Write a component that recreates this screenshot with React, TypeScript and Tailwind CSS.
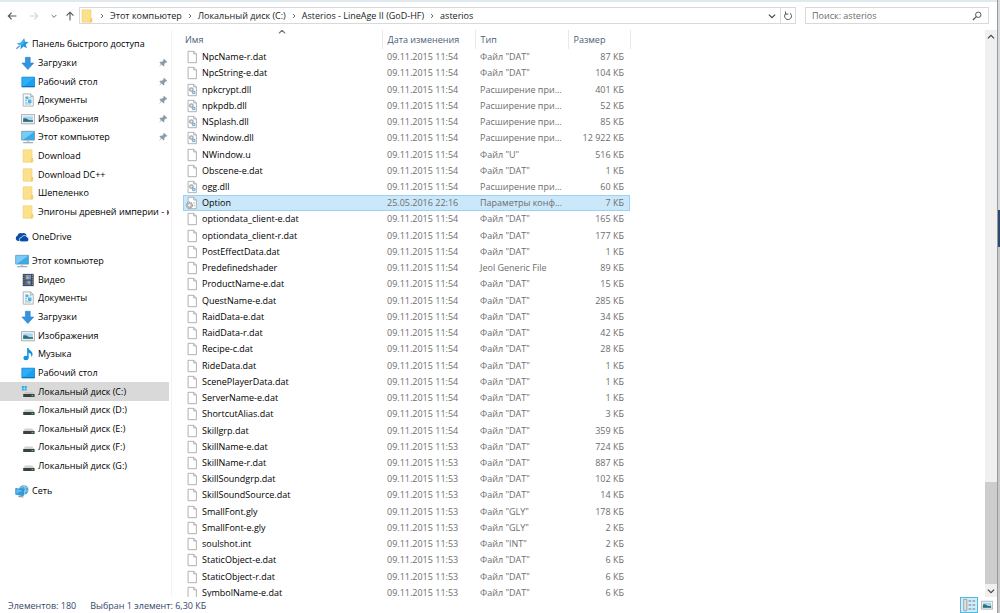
import type { ReactNode } from "react";

type IconName =
  | "star" | "download" | "desktop" | "document" | "picture" | "computer"
  | "folder" | "cloud" | "video" | "music" | "system" | "drive" | "network";

function Svg({ children, size = "size-[14px]", box = "0 0 16 16" }: { children: ReactNode; size?: string; box?: string }) {
  return (
    <svg aria-hidden="true" viewBox={box} className={`${size} shrink-0`} fill="none">
      {children}
    </svg>
  );
}

const drawings: Record<IconName, ReactNode> = {
  star: (
    <>
      <path d="M10.500 1.500l.9 3.900 4.300.4-3.400 2.700 1.200 4.300-3.800-1.900-3.500 3.300.5-4.700-4.500-1.800 4.700-1.500z" fill="#1c98e4" />
      <path d="M1.500 13.500l4-3.500" stroke="#5b9bc9" strokeWidth="1.600" />
      <path d="M10.500 1.500L7 6.200 2.200 7.700l4.500 1.800L10 8z" fill="#45aeee" />
    </>
  ),
  download: <path d="M5 1.500h5.500v6.500H14.500L7.800 15.500 1 8h4z" fill="#3393df" stroke="#2a82cc" strokeWidth=".7" />,
  desktop: (
    <>
      <path d="M1 2.500h14.500v11H1z" fill="#18a0f2" stroke="#0b7fd0" strokeWidth=".9" />
      <path d="M1.500 3h13.500L3 13H1.500z" fill="#2fadf5" />
      <path d="M1 13.300h14.500" stroke="#0a66a8" />
    </>
  ),
  document: (
    <>
      <path d="M2.500 1h8.500l3 3v11H2.500z" fill="#f7f9fa" stroke="#a3abb1" strokeWidth="1" />
      <path d="M11 1v3h3" stroke="#a3abb1" />
      <path d="M5 4h3.500v3H5zM8 7.500h4v4H8z" fill="#55b1de" />
      <path d="M4.500 8.500H7M4.500 10.500H7M4.500 12.500h7M9.500 5.500h2.500" stroke="#7fb4cf" />
    </>
  ),
  picture: (
    <>
      <path d="M.6 3h15v10.500H.6z" fill="#f3f5f6" stroke="#9aa3a9" strokeWidth="1" />
      <path d="M2.500 5h11v6.500h-11z" fill="#a5d6ef" />
      <path d="M2.500 7.500q3-1 5 .8t6 .7v2.500h-11z" fill="#2f6a88" />
      <path d="M2.500 10.500h11v1h-11z" fill="#4d8f66" />
    </>
  ),
  computer: (
    <>
      <path d="M.8 1.500h14.700v10H.8z" fill="#36aced" stroke="#6f93a8" strokeWidth=".9" />
      <path d="M1.300 2h13.700L2.500 11H1.300z" fill="#7ccbf5" />
      <path d="M6.500 11.500h3v2h-3z" fill="#b9c7cf" />
      <path d="M2.500 14.500h11.500" stroke="#93a7b3" strokeWidth="1.300" />
    </>
  ),
  folder: (
    <>
      <path d="M2.500 1h10v14H2.500z" fill="#fbdf86" stroke="#e7c25c" strokeWidth=".7" />
      <path d="M3 1.500h9v13H3z" fill="#fde08c" />
      <path d="M12 10.500h2v4.500H11z" fill="#f4cd5b" />
    </>
  ),
  cloud: (
    <>
      <path d="M3.500 12.500a3 3 0 0 1-.7-5.800 3.500 3.500 0 0 1 5-3 4 4 0 0 1 5.500 2.300L7 12.500z" fill="#0b4ea2" />
      <path d="M7.500 13.500a2.500 2.500 0 0 1 0-5 3.400 3.400 0 0 1 6-.7 3 3 0 0 1 .3 5.700z" fill="#094ab2" stroke="#fff" strokeWidth=".8" />
    </>
  ),
  video: (
    <>
      <path d="M2 1h12.500v14H2z" fill="#3d4348" />
      <path d="M5 2h6.500v5.500H5z" fill="#6d91d6" />
      <path d="M5 8.500h6.500V14H5z" fill="#4d76b5" />
      <path d="M6.500 3.500l3 2-3 2zM7 10l3-1v4z" fill="#e9b44e" />
      <path d="M3.500 2v12.500M13 2v12.500" stroke="#b5babd" strokeWidth="1" strokeDasharray="1.200 1.400" />
    </>
  ),
  music: (
    <>
      <path d="M7 1h1.500c.2 2.500 5 3.500 4.700 7.500-.1 1.200-.8 2.200-1.700 2.700.8-2.700-.6-4.200-2.800-4.700V12.500H7z" fill="#1292e4" />
      <ellipse cx="5.700" cy="12.500" rx="3" ry="2.500" fill="#1292e4" />
    </>
  ),
  system: (
    <>
      <path d="M1 1h2.300v2.300H1zM4 1h2.500v2.300H4zM1 4h2.300v2.300H1zM4 4h2.500v2.300H4z" fill="#21aee9" />
      <path d="M4.500 8h8.500l2.200 2.500H2.500z" fill="#c4c6c7" />
      <path d="M2.500 10.300h13v3.400h-13z" fill="#3b4043" />
      <path d="M12 12h2" stroke="#3ddc5a" strokeWidth="1.400" />
    </>
  ),
  drive: (
    <>
      <path d="M4.500 7.500h8.500l2.200 3H2.500z" fill="#d0d2d3" />
      <path d="M2.500 10.300h13v3.400h-13z" fill="#3b4043" />
      <path d="M12 12h2" stroke="#3ddc5a" strokeWidth="1.400" />
    </>
  ),
  network: (
    <>
      <circle cx="10" cy="6.800" r="5.400" fill="#4ba3d3" />
      <path d="M6.500 4q4-3 7.500.5M9 9q4-1.500 6-1.500M10.500 1.500q3 5 0 10" stroke="#a6dcf2" strokeWidth=".9" />
      <path d="M.8 5l8.700 1.500v7L.8 11.800z" fill="#2d9fe3" stroke="#2b86c2" strokeWidth=".8" />
      <path d="M1.500 6l7 1.200-7 3.800z" fill="#62bdf0" />
      <path d="M4 14.300l5.500.5" stroke="#6f8c9c" strokeWidth="1.200" />
    </>
  ),
};

function Pin() {
  return (
    <Svg size="size-[10px]">
      <path d="M9.500 1l5.500 5.500-1.500.8-1-.2-2.500 2.500.2 2.900-1.200 1.200L5.700 10.400 1.500 14.500l3.200-5L2.300 7l1.200-1.200 2.900.2 2.500-2.500-.2-1z" fill="#8f9ba4" />
    </Svg>
  );
}

type Place = { icon: IconName; name: string; pinned?: boolean; selected?: boolean; root?: boolean };

const places: Place[][] = [
  [
    { icon: "star", name: "Панель быстрого доступа", root: true },
    { icon: "download", name: "Загрузки", pinned: true },
    { icon: "desktop", name: "Рабочий стол", pinned: true },
    { icon: "document", name: "Документы", pinned: true },
    { icon: "picture", name: "Изображения", pinned: true },
    { icon: "computer", name: "Этот компьютер", pinned: true },
    { icon: "folder", name: "Download" },
    { icon: "folder", name: "Download DC++" },
    { icon: "folder", name: "Шепеленко" },
    { icon: "folder", name: "Эпигоны древней империи - кн" },
  ],
  [{ icon: "cloud", name: "OneDrive", root: true }],
  [
    { icon: "computer", name: "Этот компьютер", root: true },
    { icon: "video", name: "Видео" },
    { icon: "document", name: "Документы" },
    { icon: "download", name: "Загрузки" },
    { icon: "picture", name: "Изображения" },
    { icon: "music", name: "Музыка" },
    { icon: "desktop", name: "Рабочий стол" },
    { icon: "system", name: "Локальный диск (C:)", selected: true },
    { icon: "drive", name: "Локальный диск (D:)" },
    { icon: "drive", name: "Локальный диск (E:)" },
    { icon: "drive", name: "Локальный диск (F:)" },
    { icon: "drive", name: "Локальный диск (G:)" },
  ],
  [{ icon: "network", name: "Сеть", root: true }],
];

const DAT = 'Файл "DAT"';
const DLL = "Расширение при...";
const GLY = 'Файл "GLY"';
const D54 = "09.11.2015 11:54";
const D53 = "09.11.2015 11:53";

const files: [string, string, string, string][] = [
  ["NpcName-r.dat", D54, DAT, "87"],
  ["NpcString-e.dat", D54, DAT, "104"],
  ["npkcrypt.dll", D54, DLL, "401"],
  ["npkpdb.dll", D54, DLL, "52"],
  ["NSplash.dll", D54, DLL, "85"],
  ["Nwindow.dll", D54, DLL, "12 922"],
  ["NWindow.u", D54, 'Файл "U"', "516"],
  ["Obscene-e.dat", D54, DAT, "1"],
  ["ogg.dll", D54, DLL, "60"],
  ["Option", "25.05.2016 22:16", "Параметры конф...", "7"],
  ["optiondata_client-e.dat", D54, DAT, "165"],
  ["optiondata_client-r.dat", D54, DAT, "177"],
  ["PostEffectData.dat", D54, DAT, "1"],
  ["Predefinedshader", D54, "Jeol Generic File", "89"],
  ["ProductName-e.dat", D54, DAT, "15"],
  ["QuestName-e.dat", D54, DAT, "285"],
  ["RaidData-e.dat", D54, DAT, "34"],
  ["RaidData-r.dat", D54, DAT, "42"],
  ["Recipe-c.dat", D54, DAT, "28"],
  ["RideData.dat", D54, DAT, "1"],
  ["ScenePlayerData.dat", D54, DAT, "1"],
  ["ServerName-e.dat", D54, DAT, "1"],
  ["ShortcutAlias.dat", D54, DAT, "3"],
  ["Skillgrp.dat", D54, DAT, "359"],
  ["SkillName-e.dat", D53, DAT, "724"],
  ["SkillName-r.dat", D53, DAT, "887"],
  ["SkillSoundgrp.dat", D53, DAT, "102"],
  ["SkillSoundSource.dat", D53, DAT, "14"],
  ["SmallFont.gly", D53, GLY, "178"],
  ["SmallFont-e.gly", D53, GLY, "2"],
  ["soulshot.int", D53, 'Файл "INT"', "2"],
  ["StaticObject-e.dat", D53, DAT, "6"],
  ["StaticObject-r.dat", D53, DAT, "6"],
  ["SymbolName-e.dat", D53, DAT, "6"],
];

function FileIcon({ kind }: { kind: "plain" | "library" | "settings" }) {
  return (
    <Svg>
      <path d="M3.500 1.500h6.500l3 3v10h-9.500z" fill="#fff" stroke="#a6a6a6" />
      <path d="M10 1.500v3h3" stroke="#a6a6a6" />
      {kind === "library" && (
        <>
          <circle cx="7.300" cy="7.500" r="2" stroke="#9badb9" strokeWidth="1.500" fill="#dfe8ee" />
          <circle cx="10" cy="10.800" r="1.500" stroke="#7faecb" strokeWidth="1.300" fill="#dfe8ee" />
        </>
      )}
      {kind === "settings" && (
        <>
          <circle cx="5" cy="10.500" r="3.300" stroke="#9aa0a5" strokeWidth="1.800" strokeDasharray="1.600 .8" fill="#e6e9eb" />
          <circle cx="5" cy="10.500" r="2.200" stroke="#9aa0a5" fill="#eef0f1" />
          <path d="M9.500 8h2M10 11h1.500" stroke="#a3abb0" />
        </>
      )}
    </Svg>
  );
}

function Chevron({ dir, className }: { dir: "right" | "down" | "up"; className: string }) {
  const d = dir === "right" ? "M3 1.500L6 4.500 3 7.500" : dir === "down" ? "M1 3l3.500 3.500L8 3" : "M1 6l3.500-3.500L8 6";
  return (
    <svg aria-hidden="true" viewBox="0 0 9 9" className={`shrink-0 ${className}`} fill="none">
      <path d={d} stroke="currentColor" strokeWidth="1.300" />
    </svg>
  );
}

const crumbs = ["Этот компьютер", "Локальный диск (C:)", "Asterios - LineAge II (GoD-HF)", "asterios"];

function Toolbar() {
  return (
    <header className="flex h-[30px] shrink-0 items-center border-t-2 border-[#dfe9ee] pb-px pl-[7px] pr-2 text-[#555]">
      <button type="button" aria-label="Назад">
        <Svg size="size-[10px]"><path d="M15 8H2M7.500 2.500L2 8l5.500 5.500" stroke="#555" strokeWidth="1.700" /></Svg>
      </button>
      <button type="button" aria-label="Вперёд" className="ml-3">
        <Svg size="size-[10px]"><path d="M1 8h13M8.500 2.500L14 8l-5.500 5.500" stroke="#d4d4d4" strokeWidth="1.700" /></Svg>
      </button>
      <button type="button" aria-label="Последние расположения" className="ml-3">
        <Chevron dir="down" className="size-[6px]" />
      </button>
      <button type="button" aria-label="Вверх" className="ml-2">
        <Svg size="size-[10px]"><path d="M8 15V2M2.500 7.500L8 2l5.500 5.500" stroke="#555" strokeWidth="1.700" /></Svg>
      </button>
      <div className="ml-1 flex h-[17px] min-w-0 flex-1 items-center border border-[#d9d9d9] text-[#222]">
        <Svg>{drawings.folder}</Svg>
        <nav aria-label="Адрес" className="flex flex-1 items-center">
          {crumbs.map((c) => (
            <span key={c} className="flex items-center">
              <Chevron dir="right" className="mx-[5px] size-[6px] text-[#555]" />
              <a href="#" className="whitespace-nowrap">{c}</a>
            </span>
          ))}
        </nav>
        <button type="button" aria-label="Предыдущие расположения" className="px-1">
          <Chevron dir="down" className="size-[8px] text-[#444]" />
        </button>
        <button type="button" aria-label="Обновить" className="flex h-full w-[15px] items-center justify-center border-l border-[#d9d9d9]">
          <Svg size="size-[10px]">
            <path d="M4.500 4a5.500 5.500 0 1 0 6.500-.5M4 .8V5h4.500" stroke="#555" strokeWidth="1.600" />
          </Svg>
        </button>
      </div>
      <label className="ml-[9px] flex h-[17px] w-[184px] items-center border border-[#d9d9d9] px-[6px]">
        <input type="search" aria-label="Поиск" placeholder="Поиск: asterios" className="min-w-0 flex-1 bg-transparent outline-none placeholder:text-[#6d6d6d]" />
        <Svg size="size-[10px]">
          <circle cx="10" cy="6" r="4.300" stroke="#555" strokeWidth="1.600" />
          <path d="M7 9l-5.500 5.500" stroke="#555" strokeWidth="2" />
        </Svg>
      </label>
    </header>
  );
}

function Sidebar() {
  return (
    <nav aria-label="Папки" className="flex w-[169px] shrink-0 flex-col overflow-hidden pb-1 pt-[5px]">
      {places.map((group, g) => (
        <ul key={g} className="mb-[6px] flex min-h-0 flex-col last-of-type:mb-0" style={{ flex: group.length }}>
          {group.map((p) => (
            <li key={p.name} className="min-h-0 flex-1">
              <a
                href="#"
                className={`flex h-full items-center gap-[3px] overflow-hidden whitespace-nowrap ${p.root ? "pl-[15px]" : "pl-[21px]"} ${p.selected ? "bg-[#d9d9d9]" : ""}`}
              >
                <Svg>{drawings[p.icon]}</Svg>
                <span className="min-w-0 flex-1 overflow-hidden">{p.name}</span>
                {p.pinned && <span className="mr-px"><Pin /></span>}
              </a>
            </li>
          ))}
        </ul>
      ))}
      <div className="flex-5" />
    </nav>
  );
}

function FileTable() {
  return (
    <div className="min-w-0 flex-1 overflow-hidden border-l border-[#f3f3f3] pl-[11px]">
      <table className="h-[calc(100%+4px)] w-[447px] table-fixed border-collapse">
        <colgroup>
          <col className="w-[199px]" />
          <col className="w-[93px]" />
          <col className="w-[93px]" />
          <col className="w-[62px]" />
        </colgroup>
        <thead>
          <tr className="h-[19px] text-left text-[#4c607a]">
            <th className="relative border-r border-[#e8e8e8] p-0 pl-[2px] font-normal" aria-sort="ascending">
              Имя
              <Chevron dir="up" className="absolute left-[95px] top-[-2px] size-[8px] text-[#777]" />
            </th>
            <th className="border-r border-[#e8e8e8] p-0 pl-[5px] font-normal">Дата изменения</th>
            <th className="border-r border-[#e8e8e8] p-0 pl-[5px] font-normal">Тип</th>
            <th className="border-r border-[#e8e8e8] p-0 pl-[5px] font-normal">Размер</th>
          </tr>
        </thead>
        <tbody>
          {files.map(([name, date, type, size]) => {
            const selected = name === "Option";
            const kind = selected ? "settings" : name.endsWith(".dll") ? "library" : "plain";
            return (
              <tr key={name} className={`text-[#6d6d6d] ${selected ? "bg-[#cbe8fb] outline outline-[#9bd1f5] -outline-offset-1" : ""}`}>
                <td className="p-0 pl-[2px]">
                  <span className="flex items-center gap-[3px] text-black">
                    <FileIcon kind={kind} />
                    {name}
                  </span>
                </td>
                <td className="whitespace-nowrap p-0 pl-[5px]">{date}</td>
                <td className="whitespace-nowrap p-0 pl-[5px]">{type}</td>
                <td className="whitespace-nowrap p-0 pr-[6px] text-right">{size} КБ</td>
              </tr>
            );
          })}
        </tbody>
      </table>
    </div>
  );
}

function ScrollBar() {
  return (
    <div className="flex w-[12px] shrink-0 flex-col bg-[#f0f0f0] text-[#444]">
      <button type="button" aria-label="Прокрутить вверх" className="flex h-[14px] items-center justify-center">
        <Chevron dir="up" className="size-[8px]" />
      </button>
      <div className="flex-438" />
      <div className="flex-102 bg-[#cdcdcd]" />
      <button type="button" aria-label="Прокрутить вниз" className="flex h-[13px] items-center justify-center">
        <Chevron dir="down" className="size-[8px]" />
      </button>
    </div>
  );
}

function StatusBar() {
  return (
    <footer className="flex h-4 shrink-0 items-center pl-2 text-[#33486b]">
      <span className="pt-px">Элементов: 180</span>
      <span className="ml-[14px] pt-px">Выбран 1 элемент: 6,30 КБ</span>
      <div className="ml-auto flex h-full items-center pr-[2px]">
        <button type="button" aria-label="Таблица" className="flex h-full w-[18px] items-center justify-center border border-[#55b8e0] bg-[#cdeefa]">
          <Svg>
            <path d="M2 1.500h3.500v13H2z" stroke="#9a9a9a" fill="#e3e3e3" />
            <path d="M7.500 3.500h3M12 3.500h3M7.500 8h3M12 8h3M7.500 12.500h3M12 12.500h3" stroke="#6b7a85" strokeWidth="1.200" />
          </Svg>
        </button>
        <button type="button" aria-label="Крупные значки" className="flex h-full w-[17px] items-center justify-center">
          <Svg size="size-[12px]">{drawings.picture}</Svg>
        </button>
      </div>
    </footer>
  );
}

function WindowEdge() {
  return (
    <div className="flex w-[3px] shrink-0 flex-col border-l border-[#9a9a9a]">
      <div className="flex-210 bg-[#d9dadb]" />
      <div className="flex-37 bg-[#2c4a70]" />
      <div className="flex-366 bg-[#c8c8c8]" />
    </div>
  );
}

export default function App() {
  return (
    <div className="flex h-screen bg-white font-['Open_Sans','Noto_Sans',sans-serif] text-[9px] leading-[12px] text-black">
      <div className="flex min-w-0 flex-1 flex-col">
        <Toolbar />
        <main className="flex min-h-0 flex-1">
          <Sidebar />
          <div className="w-[2px] shrink-0" />
          <FileTable />
          <ScrollBar />
        </main>
        <StatusBar />
      </div>
      <WindowEdge />
    </div>
  );
}
